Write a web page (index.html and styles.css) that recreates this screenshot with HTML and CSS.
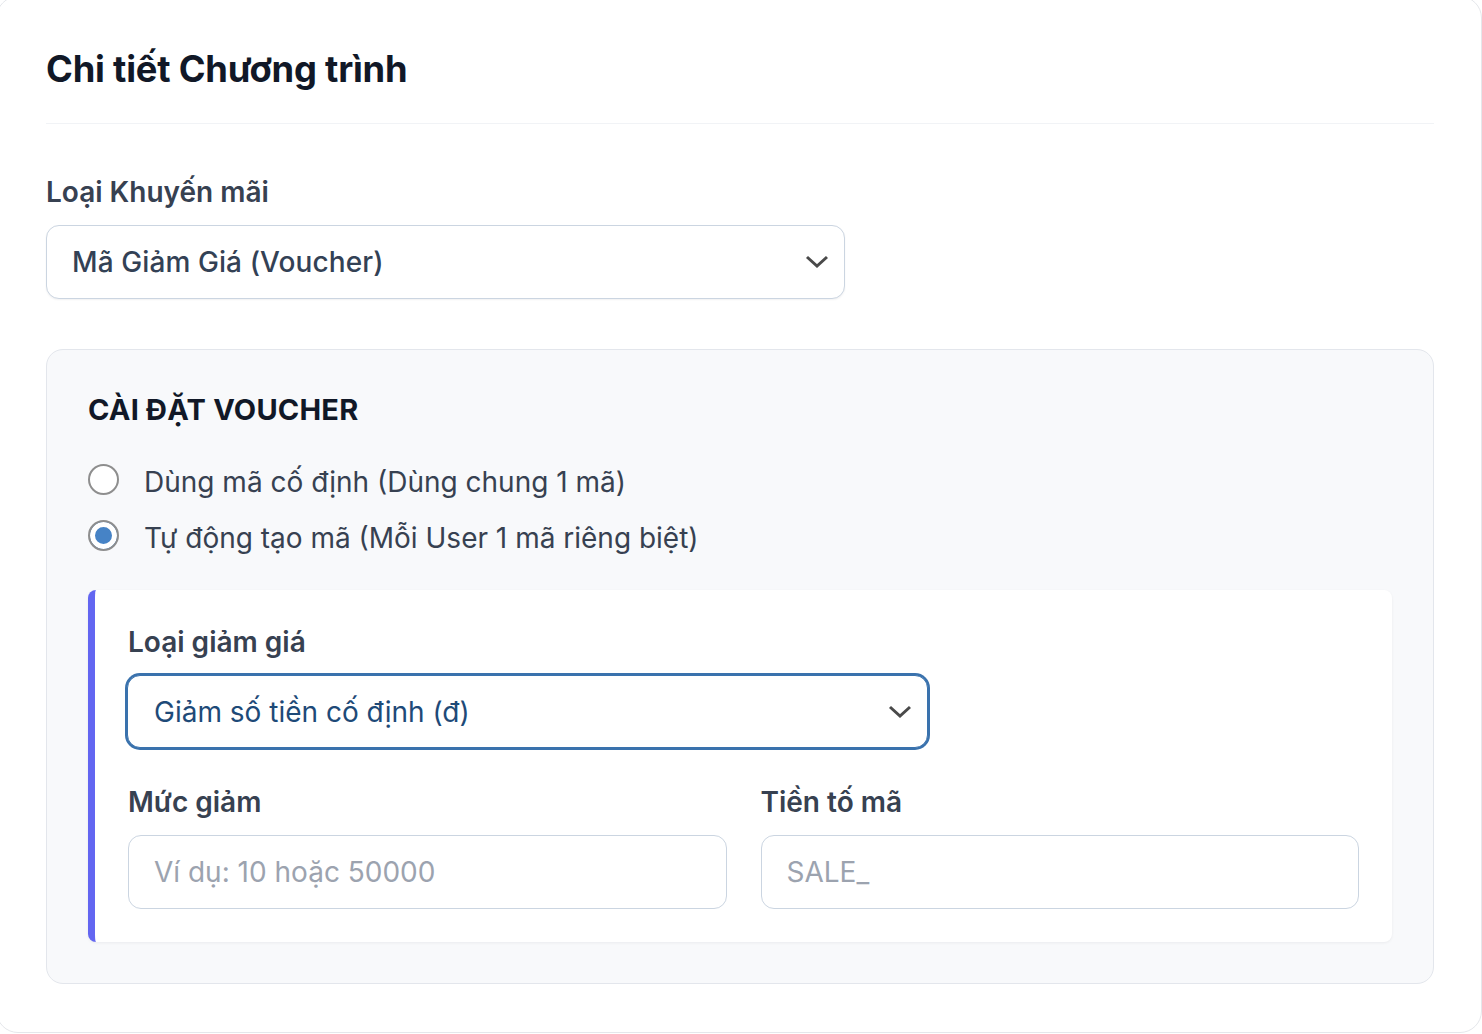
FILE: index.html
```html
<!DOCTYPE html>
<html lang="vi">
<head>
<meta charset="utf-8">
<title>Chi tiết Chương trình</title>
<link rel="stylesheet" href="styles.css">
</head>
<body>
<div class="card">
  <h2 class="card-title">Chi tiết Chương trình</h2>

  <div class="field promo-type">
    <label class="label">Loại Khuyến mãi</label>
    <div class="select select-main">
      <span class="select-value">Mã Giảm Giá (Voucher)</span>
      <svg class="chevron" width="24" height="14" viewBox="0 0 24 14"><path d="M2 2 L12 11 L22 2" fill="none" stroke="#4a4a4a" stroke-width="3"/></svg>
    </div>
  </div>

  <section class="voucher">
    <h3 class="voucher-title">CÀI ĐẶT VOUCHER</h3>
    <div class="radios">
      <label class="radio-row"><input type="radio" name="mode" class="radio"><span class="radio-text">Dùng mã cố định (Dùng chung 1 mã)</span></label>
      <label class="radio-row"><input type="radio" name="mode" class="radio" checked><span class="radio-text">Tự động tạo mã (Mỗi User 1 mã riêng biệt)</span></label>
    </div>

    <div class="auto-box">
      <div class="field">
        <label class="label">Loại giảm giá</label>
        <div class="select select-focus">
          <span class="select-value">Giảm số tiền cố định (đ)</span>
          <svg class="chevron" width="24" height="14" viewBox="0 0 24 14"><path d="M2 2 L12 11 L22 2" fill="none" stroke="#4a4a4a" stroke-width="3"/></svg>
        </div>
      </div>
      <div class="grid-2">
        <div class="field">
          <label class="label">Mức giảm</label>
          <input class="input" type="text" placeholder="Ví dụ: 10 hoặc 50000">
        </div>
        <div class="field">
          <label class="label">Tiền tố mã</label>
          <input class="input" type="text" placeholder="SALE_">
        </div>
      </div>
    </div>
  </section>
</div>
</body>
</html>
```

FILE: styles.css
```css
* { box-sizing: border-box; }
html, body { margin: 0; padding: 0; background: #ffffff; }
body {
  font-family: Inter, "Noto Sans", "Liberation Sans", sans-serif;
  color: #374151;
  overflow: hidden;
}
.card {
  margin: -4px 0 0 -4px;
  width: 1486px;
  height: 1037px;
  border: 1px solid #e5e7eb;
  border-radius: 22px;
  background: #ffffff;
  padding: 47px 47px 0 49px;
}
.card-title {
  margin: 0;
  font-size: 36.3px;
  line-height: 50px;
  font-weight: 700;
  color: #111827;
  padding-bottom: 29px;
  border-bottom: 1px solid #f1f3f6;
  letter-spacing: -0.2px;
}
.field { display: flex; flex-direction: column; }
.label {
  font-size: 28px;
  line-height: 42px;
  font-weight: 600;
  color: #374151;
  margin-bottom: 12px;
}
.promo-type { margin-top: 47px; }
.select {
  display: flex;
  align-items: center;
  justify-content: space-between;
  height: 74px;
  border: 1.5px solid #cbd5e1;
  border-radius: 13px;
  background: #fff;
  padding: 0 15px 0 25px;
  font-size: 28px;
  color: #334155;
}
.select-main {
  width: 799px;
  box-shadow: 0 1px 2px rgba(15, 23, 42, 0.06);
  font-weight: 500;
  letter-spacing: 0.1px;
}
.select-focus {
  width: 801px;
  height: 73px;
  margin-left: -1px;
  border: 1px solid #3a72ad;
  box-shadow: 0 0 0 2px #3a72ad;
  color: #1e4a78;
  padding-left: 26px;
}
.chevron { display: block; }
.voucher {
  margin-top: 50px;
  background: #f8f9fb;
  border: 1px solid #e3e6ec;
  border-radius: 17px;
  padding: 41px;
}
.voucher-title {
  margin: 0;
  font-size: 29px;
  line-height: 38px;
  font-weight: 700;
  color: #111827;
  letter-spacing: 0.2px;
}
.radios {
  margin-top: 29px;
  display: flex;
  flex-direction: column;
  gap: 14px;
}
.radio-row {
  display: flex;
  align-items: center;
  gap: 25px;
  height: 42px;
  font-size: 28px;
  color: #374151;
}
.radio-text { padding-top: 6px; }
.radio {
  appearance: none;
  -webkit-appearance: none;
  margin: 0;
  width: 31px;
  height: 31px;
  border-radius: 50%;
  border: 2px solid #8e8e8e;
  background: #ffffff;
  flex: none;
}
.radio:checked {
  background: #4683c6;
  box-shadow: inset 0 0 0 5px #ffffff;
}
.auto-box {
  margin-top: 34px;
  background: #ffffff;
  border-left: 7px solid #6366f1;
  border-radius: 8px;
  box-shadow: 0 1px 3px rgba(15, 23, 42, 0.06);
  padding: 31px 33px 33px 33px;
}
.grid-2 {
  margin-top: 33px;
  display: grid;
  grid-template-columns: 1fr 1fr;
  column-gap: 34px;
}
.input {
  height: 74px;
  border: 1.5px solid #cbd5e1;
  border-radius: 13px;
  background: #fff;
  padding: 0 25px;
  font-family: inherit;
  font-size: 28px;
  color: #334155;
  outline: none;
}
.input::placeholder { color: #9ca3af; }
```
